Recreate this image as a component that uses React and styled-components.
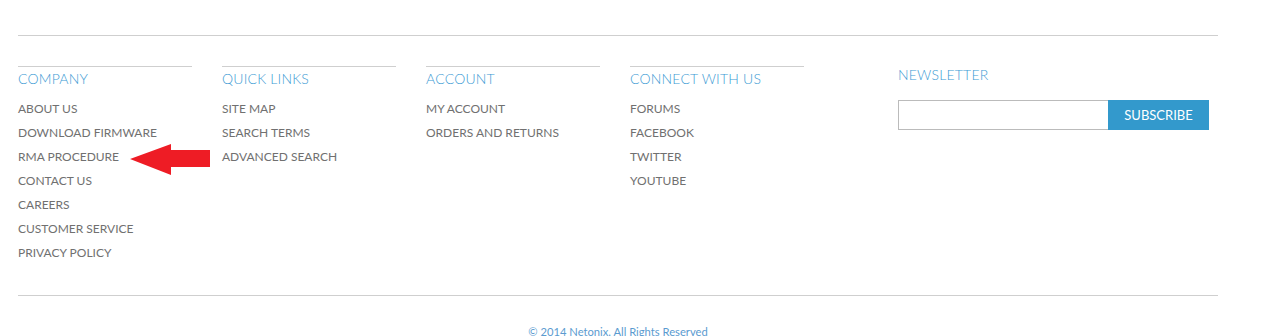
import styled, { createGlobalStyle } from "styled-components";

const GlobalStyle = createGlobalStyle`
  html, body {
    margin: 0;
    padding: 0;
    background: #fff;
    font-family: "Lato", "Open Sans", sans-serif;
  }
`;

const Footer = styled.footer`
  width: 1200px;
  margin-left: 18px;
  padding-top: 35px;
  box-sizing: border-box;
`;

const Rule = styled.div`
  height: 1px;
  background-color: #cfcfcf;
`;

const Columns = styled.div`
  display: flex;
  flex-direction: row;
  align-items: flex-start;
  padding-top: 30px;
  height: 259px;
  box-sizing: border-box;
`;

const LinkColumn = styled.div`
  width: 174px;
  margin-right: 30px;
  border-top: 1px solid #cfcfcf;
  display: flex;
  flex-direction: column;
  position: relative;
`;

const Heading = styled.h4`
  margin: 0;
  padding-top: 2px;
  font-size: 14px;
  font-weight: 300;
  line-height: 20px;
  color: #3d9bd4;
  letter-spacing: 0.2px;
  text-transform: uppercase;
`;

const LinkList = styled.ul`
  list-style: none;
  margin: 0;
  padding: 8px 0 0;
`;

const LinkItem = styled.li`
  font-size: 12px;
  line-height: 24px;
  color: #707070;
  text-transform: uppercase;
  white-space: nowrap;
`;

const Newsletter = styled.div`
  margin-left: 64px;
  width: 311px;
  display: flex;
  flex-direction: column;
`;

const NewsletterHeading = styled(Heading)`
  padding-top: 0;
  margin-top: -1px;
`;

const SubscribeForm = styled.form`
  display: flex;
  flex-direction: row;
  margin-top: 15px;
`;

const EmailInput = styled.input`
  width: 210px;
  height: 30px;
  box-sizing: border-box;
  border: 1px solid #bbb;
  border-right: none;
  margin: 0;
  padding: 0 6px;
  outline: none;
`;

const SubscribeButton = styled.button`
  width: 101px;
  height: 30px;
  border: none;
  margin: 0;
  background-color: #3399cc;
  color: #fff;
  font-family: "Lato", "Open Sans", sans-serif;
  font-size: 13px;
  text-transform: uppercase;
  cursor: pointer;
`;

const Copyright = styled.p`
  margin: 0;
  padding-top: 29px;
  text-align: center;
  font-size: 11.2px;
  line-height: 14px;
  color: #5b9bd0;
`;

const Arrow = styled.svg`
  position: absolute;
  left: 112px;
  top: 77px;
`;

const company = [
  "About Us",
  "Download Firmware",
  "RMA Procedure",
  "Contact Us",
  "Careers",
  "Customer Service",
  "Privacy Policy",
];
const quickLinks = ["Site Map", "Search Terms", "Advanced Search"];
const account = ["My Account", "Orders and Returns"];
const connect = ["Forums", "Facebook", "Twitter", "YouTube"];

function Column({ title, links, children }) {
  return (
    <LinkColumn>
      <Heading>{title}</Heading>
      <LinkList>
        {links.map((l) => (
          <LinkItem key={l}>{l}</LinkItem>
        ))}
      </LinkList>
      {children}
    </LinkColumn>
  );
}

export default function App() {
  return (
    <>
      <GlobalStyle />
      <Footer>
        <Rule />
        <Columns>
          <Column title="Company" links={company}>
            {/* red callout arrow pointing at RMA procedure */}
            <Arrow width="82" height="33" viewBox="0 0 82 33">
              <polygon
                points="0,15 41,0 41,6 80,6 80,23 41,23 41,31"
                fill="#ee1c25"
              />
            </Arrow>
          </Column>
          <Column title="Quick Links" links={quickLinks} />
          <Column title="Account" links={account} />
          <Column title="Connect With Us" links={connect} />
          <Newsletter>
            <NewsletterHeading>Newsletter</NewsletterHeading>
            <SubscribeForm onSubmit={(e) => e.preventDefault()}>
              <EmailInput type="text" />
              <SubscribeButton type="submit">Subscribe</SubscribeButton>
            </SubscribeForm>
          </Newsletter>
        </Columns>
        <Rule />
        <Copyright>© 2014 Netonix. All Rights Reserved</Copyright>
      </Footer>
    </>
  );
}
